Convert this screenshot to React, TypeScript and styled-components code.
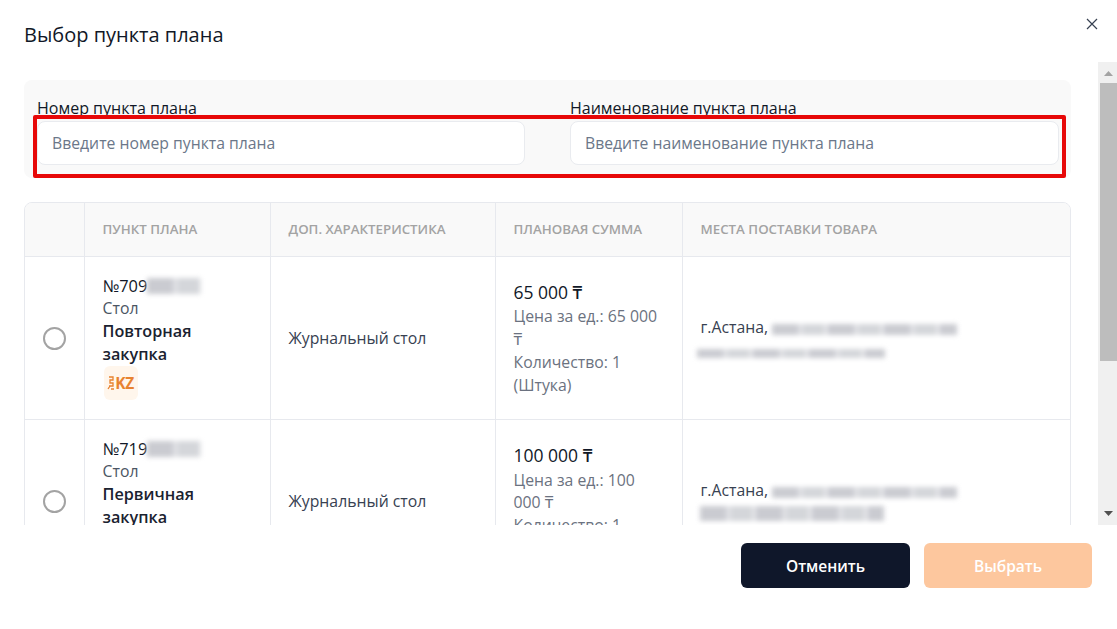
import React from 'react';
import styled, { createGlobalStyle } from 'styled-components';

const Global = createGlobalStyle`
  html, body { margin: 0; padding: 0; background: #fff; height: 100%; overflow: hidden; }
  * { box-sizing: border-box; }
  body { font-family: "Open Sans", "Noto Sans", sans-serif; color: #111827; }
`;

const Modal = styled.div`
  position: relative;
  width: 1117px;
  height: 629px;
  display: flex;
  flex-direction: column;
  background: #fff;
`;
const Header = styled.header`
  height: 62px;
  padding: 21px 24px 0;
  display: flex;
  justify-content: space-between;
  align-items: flex-start;
`;
const Title = styled.h2`
  margin: 0;
  font-size: 20px;
  line-height: 28px;
  font-weight: 500;
  color: #111827;
`;
const CloseButton = styled.button`
  position: absolute;
  top: 16px;
  right: 17px;
  width: 16px;
  height: 16px;
  padding: 0;
  border: 0;
  background: none;
  color: #374151;
  display: flex;
`;
const Body = styled.div`
  height: 463px;
  display: flex;
`;
const Scroller = styled.div`
  flex: 1;
  overflow: hidden;
  padding: 18px 27px 0 24px;
`;
const Filters = styled.section`
  position: relative;
  height: 98px;
  padding: 16px 13px 0;
  background: #f9f9f9;
  border-radius: 8px;
  display: grid;
  grid-template-columns: 488px 489px;
  column-gap: 45px;
`;
const Field = styled.label`
  display: flex;
  flex-direction: column;
`;
const FieldLabel = styled.span`
  font-size: 16px;
  line-height: 24px;
  height: 25px;
  color: #111827;
`;
const TextInput = styled.input`
  width: 100%;
  height: 44px;
  padding: 0 14px;
  border: 1px solid #e9ebef;
  border-radius: 8px;
  background: #fff;
  font: inherit;
  font-size: 15.75px;
  outline: none;
  &::placeholder { color: #6b7789; opacity: 1; }
`;
const Highlight = styled.div`
  position: absolute;
  left: 9px;
  top: 35px;
  width: 1033px;
  height: 63px;
  border: 4px solid #e70808;
  border-radius: 2px;
  pointer-events: none;
`;
const TableWrap = styled.div`
  margin-top: 24px;
  border: 1px solid #e7e9ee;
  border-radius: 8px;
  overflow: hidden;
`;
const Table = styled.table`
  width: 100%;
  border-collapse: collapse;
  table-layout: fixed;
`;
const Th = styled.th`
  height: 53px;
  padding: 0 18px;
  background: #f9f9f9;
  border-left: 1px solid #e7e9ee;
  text-align: left;
  font-size: 13.3px;
  font-weight: 600;
  color: #a3a3a3;
  text-transform: uppercase;
  &:first-child { border-left: 0; }
`;
const Td = styled.td`
  padding: 2px 18px 0;
  border-left: 1px solid #e7e9ee;
  border-top: 1px solid #e7e9ee;
  font-size: 15.8px;
  line-height: 22.7px;
  color: #374151;
  vertical-align: middle;
  &:first-child { border-left: 0; }
`;
const Row = styled.tr<{ $h: number }>`
  height: ${p => p.$h}px;
`;
const Radio = styled.span`
  display: block;
  width: 23px;
  height: 23px;
  margin: 0 auto;
  border: 2px solid #a3a3a3;
  border-radius: 50%;
  background: #fff;
`;
const PlanCell = styled.div`
  height: 160px;
  padding-top: 16px;
`;
const PlanId = styled.div`
  color: #111827;
  font-size: 16.4px;
  white-space: nowrap;
`;
const Blur = styled.span<{ $w: number; $h: number; $shift?: number }>`
  display: inline-block;
  width: ${p => p.$w}px;
  height: ${p => p.$h}px;
  margin-left: ${p => p.$shift || 0}px;
  vertical-align: -2px;
  background: repeating-linear-gradient(90deg, #cacbd1 0 26px, #e0e1e5 26px 31px, #d4d6da 31px 52px, #e5e6e9 52px 56px);
  filter: blur(2.5px);
`;
const PlanName = styled.div`
  color: #4b5563;
`;
const PlanKind = styled.div`
  color: #1a2230;
  font-size: 16.2px;
  font-weight: 600;
`;
const Badge = styled.div`
  width: 34px;
  height: 34px;
  margin: 1px 0 0 1px;
  background: #fff6ec;
  border-radius: 6px;
  display: flex;
  align-items: center;
  justify-content: center;
  color: #e8822f;
  font-size: 15.5px;
  font-weight: 700;
  letter-spacing: -0.3px;
`;
const Amount = styled.div`
  color: #111827;
  font-size: 17.5px;
  font-weight: 500;
  margin-bottom: 2px;
`;
const Muted = styled.div`
  color: #6b7280;
`;
const AddressLine = styled.div`
  white-space: nowrap;
`;
const ScrollBar = styled.div`
  width: 19px;
  padding-left: 2px;
  background: #f0f0f0;
  display: flex;
  flex-direction: column;
`;
const ScrollArrow = styled.div<{ $h: number; $top?: number }>`
  height: ${p => p.$h}px;
  padding-top: ${p => p.$top || 0}px;
  display: flex;
  align-items: center;
  justify-content: center;
  flex: none;
`;
const ScrollThumb = styled.div`
  height: 278px;
  background: #bdbdbd;
  flex: none;
`;
const ScrollSpace = styled.div`
  flex: 1;
`;
const Footer = styled.footer`
  flex: 1;
  padding: 18px 25px 0 0;
  display: flex;
  justify-content: flex-end;
  gap: 14px;
`;
const ActionButton = styled.button<{ $primary?: boolean }>`
  width: ${p => (p.$primary ? 168 : 169)}px;
  height: 45px;
  border: 0;
  border-radius: 6px;
  font: inherit;
  font-size: 15.5px;
  font-weight: 600;
  color: #fff;
  background: ${p => (p.$primary ? '#fdc79e' : '#0f172a')};
`;

const BadgeMark = () => (
  <svg width="8" height="16" viewBox="0 0 8 16" fill="none" stroke="#e8822f" strokeWidth="1.3">
    <path d="M2 2h4v3H3v3h3v3H2M1 14l2-3M4 14h3" />
  </svg>
);

export default function App() {
  return (
    <>
      <Global />
      <Modal>
        <Header>
          <Title>Выбор пункта плана</Title>
          <CloseButton aria-label="Закрыть">
            <svg width="16" height="16" viewBox="0 0 16 16" fill="none" stroke="currentColor" strokeWidth="1.2">
              <path d="M3 3l10 10M13 3L3 13" />
            </svg>
          </CloseButton>
        </Header>
        <Body>
          <Scroller>
            <Filters>
              <Field>
                <FieldLabel>Номер пункта плана</FieldLabel>
                <TextInput placeholder="Введите номер пункта плана" />
              </Field>
              <Field>
                <FieldLabel>Наименование пункта плана</FieldLabel>
                <TextInput placeholder="Введите наименование пункта плана" />
              </Field>
              <Highlight />
            </Filters>
            <TableWrap>
              <Table>
                <colgroup>
                  <col style={{ width: 59 }} />
                  <col style={{ width: 186 }} />
                  <col style={{ width: 225 }} />
                  <col style={{ width: 187 }} />
                  <col />
                </colgroup>
                <thead>
                  <tr>
                    <Th />
                    <Th>Пункт плана</Th>
                    <Th>Доп. характеристика</Th>
                    <Th>Плановая сумма</Th>
                    <Th>Места поставки товара</Th>
                  </tr>
                </thead>
                <tbody>
                  <Row $h={163}>
                    <Td><Radio /></Td>
                    <Td>
                      <PlanCell>
                        <PlanId>№709<Blur $w={54} $h={16} /></PlanId>
                        <PlanName>Стол</PlanName>
                        <PlanKind>Повторная закупка</PlanKind>
                        <Badge><BadgeMark />KZ</Badge>
                      </PlanCell>
                    </Td>
                    <Td>Журнальный стол</Td>
                    <Td>
                      <Amount>65 000 ₸</Amount>
                      <Muted>Цена за ед.: 65 000 ₸</Muted>
                      <Muted>Количество: 1 (Штука)</Muted>
                    </Td>
                    <Td>
                      <AddressLine>г.Астана, <Blur $w={185} $h={11} /></AddressLine>
                      <AddressLine><Blur $w={188} $h={9} $shift={-4} /></AddressLine>
                    </Td>
                  </Row>
                  <Row $h={163}>
                    <Td><Radio /></Td>
                    <Td>
                      <PlanCell>
                        <PlanId>№719<Blur $w={54} $h={16} /></PlanId>
                        <PlanName>Стол</PlanName>
                        <PlanKind>Первичная закупка</PlanKind>
                        <Badge><BadgeMark />KZ</Badge>
                      </PlanCell>
                    </Td>
                    <Td>Журнальный стол</Td>
                    <Td>
                      <Amount>100 000 ₸</Amount>
                      <Muted>Цена за ед.: 100 000 ₸</Muted>
                      <Muted>Количество: 1 (Штука)</Muted>
                    </Td>
                    <Td>
                      <AddressLine>г.Астана, <Blur $w={185} $h={11} /></AddressLine>
                      <AddressLine><Blur $w={184} $h={15} $shift={-1} /></AddressLine>
                    </Td>
                  </Row>
                </tbody>
              </Table>
            </TableWrap>
          </Scroller>
          <ScrollBar>
            <ScrollArrow $h={21} $top={2}>
              <svg width="9" height="5" viewBox="0 0 9 5" fill="#a3a3a3"><path d="M4.5 0L9 5H0z" /></svg>
            </ScrollArrow>
            <ScrollThumb />
            <ScrollSpace />
            <ScrollArrow $h={24}>
              <svg width="9" height="5" viewBox="0 0 9 5" fill="#505050"><path d="M0 0h9L4.5 5z" /></svg>
            </ScrollArrow>
          </ScrollBar>
        </Body>
        <Footer>
          <ActionButton>Отменить</ActionButton>
          <ActionButton $primary>Выбрать</ActionButton>
        </Footer>
      </Modal>
    </>
  );
}
